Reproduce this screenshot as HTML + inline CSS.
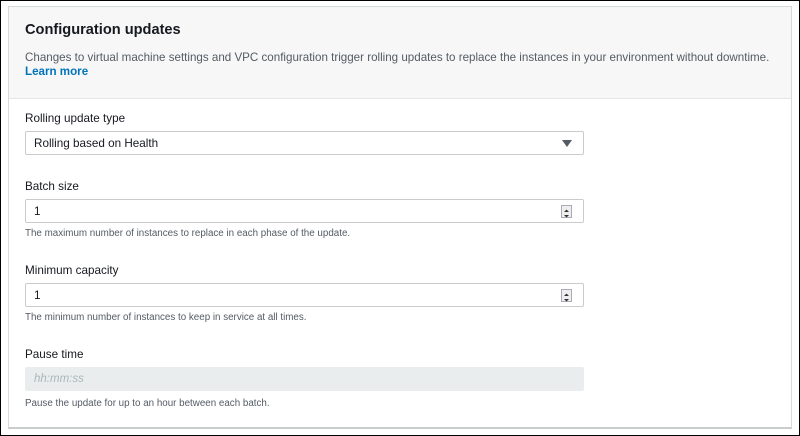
<!DOCTYPE html>
<html><head><style>
body{margin:0;width:800px;height:436px;background:#fff;font-family:"Liberation Sans",Arial,sans-serif;position:relative;overflow:hidden}
.frame{position:absolute;left:0;top:0;width:798px;height:434px;border:1px solid #000}
.panel{position:absolute;left:8px;top:6px;width:782px;height:420px;border:1px solid #d5dbdb;border-bottom:2px solid #c8cccc;background:#fff}
.head{position:absolute;left:0;top:0;width:782px;height:91px;background:#f7f7f7;border-bottom:1px solid #e6e6e6}
.t{position:absolute;white-space:nowrap}
.box{position:absolute;left:16px;width:557px;height:22px;border:1px solid #c8cccc;border-radius:2px;background:#fff}
.lbl{font-size:11.7px;color:#16191f}
.help{font-size:9.8px;color:#545b64}
.spin{position:absolute;right:11px;top:5px;width:9px;height:11px;border:1px solid #aab;background:#eee}
</style></head><body>
<div class="frame"></div>
<div class="panel">
<div class="head">
<div class="t" style="left:16px;top:15px;font-size:14.6px;font-weight:bold;color:#16191f">Configuration updates</div>
<div class="t" style="left:16px;top:44px;font-size:11.6px;color:#545b64">Changes to virtual machine settings and VPC configuration trigger rolling updates to replace the instances in your environment without downtime.</div>
<div class="t" style="left:16px;top:58px;font-size:11.6px;font-weight:bold;color:#0073bb">Learn more</div>
</div>
<div class="t lbl" style="left:16px;top:105px">Rolling update type</div>
<div class="box" style="top:124px"><div class="t lbl" style="left:8px;top:5px">Rolling based on Health</div>
<svg style="position:absolute;right:11px;top:8px" width="10" height="7"><path d="M0 0H10L5 7Z" fill="#545b64"/></svg></div>
<div class="t lbl" style="left:16px;top:173px">Batch size</div>
<div class="box" style="top:192px"><div class="t lbl" style="left:8px;top:5px">1</div><div class="spin"><svg width="9" height="11"><path d="M2 4L4.5 1.5 7 4Z M2 7L4.5 9.5 7 7Z" fill="#333"/></svg></div></div>
<div class="t help" style="left:16px;top:221px">The maximum number of instances to replace in each phase of the update.</div>
<div class="t lbl" style="left:16px;top:257px">Minimum capacity</div>
<div class="box" style="top:276px"><div class="t lbl" style="left:8px;top:5px">1</div><div class="spin"><svg width="9" height="11"><path d="M2 4L4.5 1.5 7 4Z M2 7L4.5 9.5 7 7Z" fill="#333"/></svg></div></div>
<div class="t help" style="left:16px;top:305px">The minimum number of instances to keep in service at all times.</div>
<div class="t lbl" style="left:16px;top:341px">Pause time</div>
<div class="box" style="top:360px;background:#eaeded;border-color:#eaeded"><div class="t" style="left:8px;top:5px;font-size:11.5px;font-style:italic;color:#aab7b8">hh:mm:ss</div></div>
<div class="t help" style="left:16px;top:391px">Pause the update for up to an hour between each batch.</div>
</div>
</body></html>
